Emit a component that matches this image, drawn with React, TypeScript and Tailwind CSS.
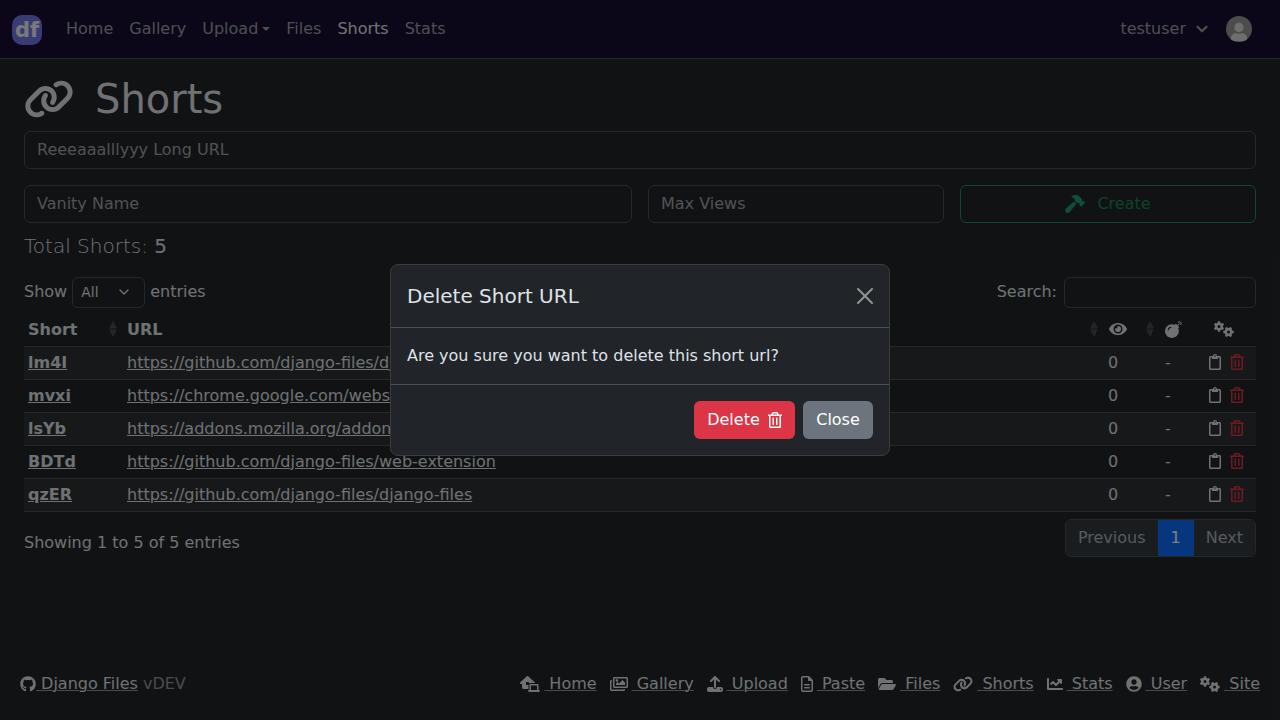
import { FaRegClipboard, FaRegTrashAlt, FaEye, FaBomb, FaUserCircle, FaUser, FaRegImages, FaFolderOpen, FaChartLine, FaGithub } from 'react-icons/fa';
import { FaHouseLaptop, FaUpload, FaLink, FaHammer, FaGears, FaRegFileLines } from 'react-icons/fa6';
import { LuChevronDown } from 'react-icons/lu';

const rows = [
  { short: 'lm4I', url: 'https://github.com/django-files/dj' },
  { short: 'mvxi', url: 'https://chrome.google.com/webstore/detail/django' },
  { short: 'lsYb', url: 'https://addons.mozilla.org/addon/django-files' },
  { short: 'BDTd', url: 'https://github.com/django-files/web-extension' },
  { short: 'qzER', url: 'https://github.com/django-files/django-files' },
];

const footerLinks = [
  { label: 'Home', icon: <FaHouseLaptop className="w-[20px] h-[16px]" /> },
  { label: 'Gallery', icon: <FaRegImages className="w-[18px] h-[16px]" /> },
  { label: 'Upload', icon: <FaUpload className="w-[16px] h-[16px]" /> },
  { label: 'Paste', icon: <FaRegFileLines className="w-[12px] h-[16px]" /> },
  { label: 'Files', icon: <FaFolderOpen className="w-[18px] h-[16px]" /> },
  { label: 'Shorts', icon: <FaLink className="w-[20px] h-[16px]" /> },
  { label: 'Stats', icon: <FaChartLine className="w-[16px] h-[16px]" /> },
  { label: 'User', icon: <FaUserCircle className="w-[16px] h-[16px]" /> },
  { label: 'Site', icon: <FaGears className="w-[20px] h-[16px]" /> },
];

const SortArrows = () => (
  <svg width="10" height="16" viewBox="0 0 10 16" className="text-[#dee2e6] opacity-20">
    <path d="M5 0 L9 7.5 L1 7.5 Z M5 16 L1 8.5 L9 8.5 Z" fill="currentColor" />
  </svg>
);

const Logo = () => (
  <div className="mt-[2px] w-[30px] h-[30px] rounded-[10px] bg-[#7279e8] flex items-center justify-center">
    <span className="text-[21px] font-bold text-[#f2f2f2] leading-none">df</span>
  </div>
);

const App = () => {
  return (
    <div className="relative h-[720px] w-[1280px] overflow-hidden bg-[#212529] text-[#dee2e6] text-base font-['DejaVu_Sans',sans-serif]">
      <nav className="h-[59px] border-b border-[#495057] bg-[#160e31] flex items-center pl-[12px] pr-[28px]">
        <Logo />
        <div className="flex items-center ml-[24px] gap-[16px] text-[#9d9ea3]">
          <span>Home</span>
          <span>Gallery</span>
          <span className="flex items-center">
            Upload
            <span className="ml-[4px] border-x-[4.8px] border-t-[4.8px] border-x-transparent border-t-[#9d9ea3]" />
          </span>
          <span>Files</span>
          <span className="text-[#e4e5e7]">Shorts</span>
          <span>Stats</span>
        </div>
        <div className="ml-auto flex items-center text-[#9d9ea3]">
          <span>testuser</span>
          <LuChevronDown className="ml-[7px] w-[18px] h-[18px]" strokeWidth={3} />
          <div className="ml-[15px] w-[26px] h-[26px] rounded-full bg-[#999] overflow-hidden flex items-end justify-center">
            <FaUser className="w-[16px] h-[20px] text-[#ddd]" />
          </div>
        </div>
      </nav>

      <main className="px-[24px]">
        <h1 className="flex items-center h-[72px] text-[40px] leading-[48px] pt-[8px]">
          <FaLink className="w-[50px] h-[40px]" />
          <span className="ml-[21px]">Shorts</span>
        </h1>

        <div className="h-[38px] border border-[#495057] rounded-[6px] px-[12px] flex items-center text-[#a0a4a9]">Reeeaaalllyyy Long URL</div>

        <div className="mt-[16px] grid grid-cols-[608px_296px_296px] gap-[16px]">
          <div className="h-[38px] border border-[#495057] rounded-[6px] px-[12px] flex items-center text-[#a0a4a9]">Vanity Name</div>
          <div className="h-[38px] border border-[#495057] rounded-[6px] px-[12px] flex items-center text-[#a0a4a9]">Max Views</div>
          <div className="h-[38px] border border-[#1f8a68] rounded-[6px] flex items-center justify-center text-[#198754]">
            <FaHammer className="w-[20px] h-[18px] text-[#1f9a70]" />
            <span className="ml-[12px]">Create</span>
          </div>
        </div>

        <div className="mt-[11px] h-[24px] text-[20px] leading-[24px] font-extralight">
          Total Shorts: <span className="font-normal">5</span>
        </div>

        <div className="mt-[18px] flex items-center justify-between h-[32px]">
          <div className="flex items-center">
            <span>Show</span>
            <div className="ml-[5px] w-[73px] h-[31px] border border-[#495057] rounded-[6px] pl-[8px] pr-[14px] flex items-center justify-between text-sm">
              All
              <LuChevronDown className="w-[16px] h-[16px] -mr-[2px]" />
            </div>
            <span className="ml-[5px]">entries</span>
          </div>
          <div className="flex items-center">
            <span>Search:</span>
            <div className="ml-[7px] w-[192px] h-[31px] border border-[#495057] rounded-[6px]" />
          </div>
        </div>

        <table className="mt-[5px] w-full table-fixed border-collapse">
          <thead>
            <tr className="h-[33px] border-b border-[#495057]">
              <th className="w-[99px] px-[4px] text-left font-bold">
                <div className="flex items-center justify-between pr-[1px]">
                  <span className="pt-[2px]">Short</span>
                  <SortArrows />
                </div>
              </th>
              <th className="px-[4px] pt-[2px] text-left font-bold">URL</th>
              <th className="w-[56px] px-[4px]">
                <div className="flex items-center">
                  <SortArrows />
                  <FaEye className="ml-[10px] w-[18px] h-[16px]" />
                </div>
              </th>
              <th className="w-[54px] px-[4px]">
                <div className="flex items-center">
                  <SortArrows />
                  <FaBomb className="ml-[10px] w-[17px] h-[17px]" />
                </div>
              </th>
              <th className="w-[61px] px-[4px]">
                <FaGears className="w-[20px] h-[16px] ml-[15px]" />
              </th>
            </tr>
          </thead>
          <tbody>
            {rows.map((row) => (
              <tr key={row.short} className="h-[33px] border-b border-[#495057] odd:bg-[#2c3034]">
                <td className="px-[4px] font-bold underline">{row.short}</td>
                <td className="px-[4px] underline">{row.url}</td>
                <td className="px-[4px] text-center">0</td>
                <td className="px-[4px] text-center">-</td>
                <td className="px-[4px]">
                  <div className="flex items-center pl-[10px] pb-[2px]">
                    <FaRegClipboard className="w-[12px] h-[16px]" />
                    <FaRegTrashAlt className="ml-[9px] w-[14px] h-[16px] text-[#dc3545]" />
                  </div>
                </td>
              </tr>
            ))}
          </tbody>
        </table>

        <div className="mt-[7px] flex items-start justify-between">
          <span className="mt-[12px]">Showing 1 to 5 of 5 entries</span>
          <div className="flex h-[38px] ml-auto rounded-[6px] border border-[#495057] overflow-hidden items-stretch">
            <span className="px-[12px] flex items-center text-[#adb5bd] bg-[#343a40]">Previous</span>
            <span className="px-[13px] flex items-center bg-[#0d6efd] text-white">1</span>
            <span className="px-[12px] flex items-center text-[#adb5bd] bg-[#343a40]">Next</span>
          </div>
        </div>
      </main>

      <footer className="absolute left-[20px] right-[20px] top-[672px] flex items-center justify-between">
        <div className="flex items-center">
          <FaGithub className="w-[16px] h-[16px]" />
          <span className="underline decoration-1 decoration-[#dee2e6]/60 whitespace-pre"> Django Files</span>
          <span className="ml-[5px] opacity-60">vDEV</span>
        </div>
        <div className="flex items-center gap-[13px]">
          {footerLinks.map((link) => (
            <span key={link.label} className="flex items-center">
              {link.icon}
              <span className="ml-[4px] underline decoration-1 decoration-[#dee2e6]/60 whitespace-pre"> {link.label}</span>
            </span>
          ))}
        </div>
      </footer>

      {/* backdrop + modal */}
      <div className="absolute inset-0 bg-black/50" />
      <div className="absolute left-[390px] top-[264px] w-[500px] h-[192px] bg-[#212529] border border-[#3a3c3f] rounded-[8px] flex flex-col">
        <div className="h-[63px] border-b border-[#495057] flex items-center justify-between pl-[16px] pr-[16px]">
          <span className="text-[20px]">Delete Short URL</span>
          <svg width="16" height="16" viewBox="0 0 16 16" className="text-[#909294]">
            <path fill="currentColor" d="M.293.293a1 1 0 0 1 1.414 0L8 6.586 14.293.293a1 1 0 1 1 1.414 1.414L9.414 8l6.293 6.293a1 1 0 0 1-1.414 1.414L8 9.414l-6.293 6.293a1 1 0 0 1-1.414-1.414L6.586 8 .293 1.707a1 1 0 0 1 0-1.414z" />
          </svg>
        </div>
        <div className="h-[57px] border-b border-[#495057] flex items-center px-[16px]">Are you sure you want to delete this short url?</div>
        <div className="flex-1 flex items-center justify-end gap-[8px] pr-[16px]">
          <button className="h-[38px] w-[101px] rounded-[6px] bg-[#dc3545] text-white flex items-center justify-center">
            Delete
            <FaRegTrashAlt className="ml-[8px] w-[14px] h-[16px]" />
          </button>
          <button className="h-[38px] w-[70px] rounded-[6px] bg-[#6c757d] text-white flex items-center justify-center">Close</button>
        </div>
      </div>
    </div>
  );
};

export default App;
